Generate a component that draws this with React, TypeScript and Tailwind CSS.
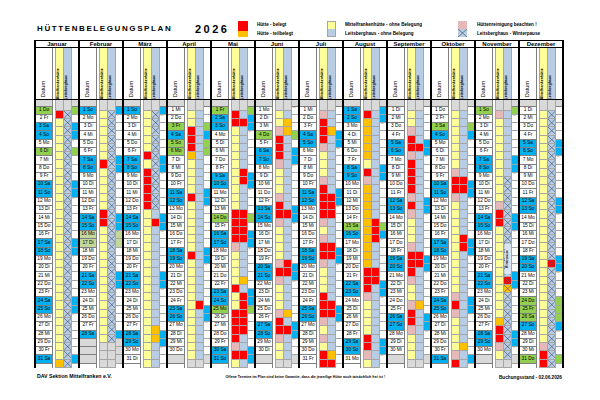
const MONTHS = ["Januar", "Februar", "März", "April", "Mai", "Juni", "Juli", "August", "September", "Oktober", "November", "Dezember"];
const WD = ["So", "Mo", "Di", "Mi", "Do", "Fr", "Sa"];

const HOLI: Record<number, number[]> = { 0: [1, 6], 3: [3, 5, 6], 4: [1, 14, 25], 5: [4], 7: [15], 9: [3], 10: [1], 11: [24, 25, 26, 31] };
const FASCHING: Record<number, number[]> = { 1: [16, 17] };

// nights: r = belegt, o = teilbelegt, p = Reinigung, x = Winterpause, R/O = Winterpause + belegt/teilbelegt
const MF = [
  "r1 o31",
  "r7 r13-14",
  "r6 r8-12",
  "r3-5 o6 r11 r18",
  "r1-2 r13-16 p17 r22 r25-28 p29 r30",
  "p3 r4-6 p7 p11 r12-13 p14 p19 r20 p21 p25 r26-27 p28",
  "p1 r2-4 p5 p9 r10-13 p14 p16 r17-18 p19 r23-25 p26 p28 r30-31",
  "r1 o2-6 r8 p9 o10-19 r20-22 p23 r28-29 p30",
  "p3 r4-5 p6 r7-10 p11 r12 p13 p17 r18-20 p21 p24 r25-26 p27",
  "p8 r9-10 p11 p23 r24 p25 p30 r31",
  "p1 p12 r13-14 o26 r27-28 p29",
  "p29 r30-31",
];
const LH = [
  "x1-31",
  "x1-28",
  "x1-12 r14 o27-28",
  "r24",
  "r2 r8-9 r13-16 o21 r23-27 r30",
  "o2-3 r13 r19-20 o25 r27",
  "o3 r11-13 r17-18 r24-25 o30 r31",
  "r14-16 r20-21",
  "r5 r18-19 o24",
  "r9-10 r16-17 o29",
  "x9-30 R21 O22",
  "x1-31 R19",
];

function parse(spec: string, days: number) {
  const a: string[] = Array(31).fill("");
  for (const t of spec.split(" ").filter(Boolean)) {
    const m = /^([a-zA-Z])(\d+)(?:-(\d+))?$/.exec(t);
    if (!m) continue;
    const from = Number(m[2]);
    const to = m[3] ? Number(m[3]) : from;
    for (let d = from; d <= to; d++) a[d - 1] = m[1];
  }
  for (let d = days + 1; d <= 31; d++) a[d - 1] = "g";
  return a;
}

function isoWeek(date: Date) {
  const d = new Date(Date.UTC(date.getFullYear(), date.getMonth(), date.getDate()));
  const day = d.getUTCDay() || 7;
  d.setUTCDate(d.getUTCDate() + 4 - day);
  const y0 = new Date(Date.UTC(d.getUTCFullYear(), 0, 1));
  return Math.ceil(((d.getTime() - y0.getTime()) / 86400000 + 1) / 7);
}

function dayBg(m: number, d: number, days: number) {
  if (d > days) return "bg-[#d9d9d9]";
  if (HOLI[m]?.includes(d)) return "bg-[#92d050]";
  if (FASCHING[m]?.includes(d)) return "bg-[#c4d79b]";
  const dow = new Date(2026, m, d).getDay();
  if (dow === 0 || dow === 6) return "bg-[#00b0f0]";
  return "bg-white";
}

function Cross() {
  return (
    <svg className="absolute inset-0 h-full w-full" viewBox="0 0 10 10" preserveAspectRatio="none">
      <path d="M0 0L10 10M10 0L0 10" stroke="#4b5a70" strokeWidth="0.7" vectorEffect="non-scaling-stroke" fill="none" />
    </svg>
  );
}

function Night({ s, base }: { s: string; base: string }) {
  let bg = base;
  if (s === "r" || s === "R") bg = "bg-[#ff0000]";
  else if (s === "o" || s === "O") bg = "bg-[#ffc000]";
  else if (s === "p") bg = "bg-[#e6b8b7]";
  else if (s === "g") bg = "bg-[#d9d9d9]";
  const cross = s === "x" || s === "R" || s === "O";
  return (
    <div className={`relative h-[8.3px] shrink-0 border-b border-[#a6a6a6] ${bg}`}>
      {cross && <Cross />}
    </div>
  );
}

const ROWS = Array.from({ length: 31 }, (_, i) => i + 1);

function Month({ m }: { m: number }) {
  const days = new Date(2026, m + 1, 0).getDate();
  const mf = parse(MF[m], days);
  const lh = parse(LH[m], days);
  const last = m === 11;
  return (
    <div className={`flex flex-col border-l-2 border-black ${last ? "w-[46px] border-r-2" : "w-[44px]"}`}>
      {/* month name */}
      <div className="flex h-[6.5px] items-center justify-center border-b border-black text-[6px] font-bold leading-none">
        {MONTHS[m]}
      </div>

      {/* vertical headers */}
      <div className="flex h-[52.5px] border-b border-black">
        <div className="flex w-[17px] items-end justify-center border-r border-[#7f7f7f] pb-[2px]">
          <span className="rotate-180 text-[5.5px] leading-none [writing-mode:vertical-rl]">Datum</span>
        </div>
        <div className="w-[1.5px]" />
        <div className="flex w-[9px] justify-center border-x border-[#a6a6a6] bg-[#ffff99] pt-[3px]">
          <span className="rotate-180 text-[3.6px] font-bold leading-none [writing-mode:vertical-rl]">Mittelfrankenhütte</span>
        </div>
        <div className="flex w-[8.5px] justify-center border-r border-[#a6a6a6] bg-[#b8cce4] pt-[3px]">
          <span className="rotate-180 text-[3.6px] font-bold leading-none [writing-mode:vertical-rl]">Leitsberghaus</span>
        </div>
        <div className="w-[6px]" />
      </div>

      {/* body */}
      <div className="flex">
        <div className="flex w-[17px] flex-col border-r border-[#7f7f7f]">
          <div className="h-[6.5px] shrink-0 border-b border-[#7f7f7f] bg-[#d9d9d9]" />
          {ROWS.map((d) => (
            <div
              key={d}
              className={`flex h-[8.3px] shrink-0 items-center justify-center border-b border-[#7f7f7f] text-[4.8px] leading-none ${dayBg(m, d, days)}`}
            >
              {d <= days ? `${d} ${WD[new Date(2026, m, d).getDay()]}` : ""}
            </div>
          ))}
        </div>
        <div className="w-[1.5px]" />
        <div className="flex w-[9px] flex-col border-x border-[#a6a6a6]">
          <div className="h-[10.65px] shrink-0 border-b border-[#a6a6a6] bg-[#d9d9d9]" />
          {mf.map((s, i) => (
            <Night key={i} s={s} base="bg-[#ffff99]" />
          ))}
        </div>
        <div className="relative flex w-[8.5px] flex-col border-r border-[#a6a6a6]">
          <div className="h-[10.65px] shrink-0 border-b border-[#a6a6a6] bg-[#d9d9d9]" />
          {lh.map((s, i) => (
            <Night key={i} s={s} base="bg-[#b8cce4]" />
          ))}
          {m === 10 && (
            <div className="absolute left-[1px] top-[144px] flex h-[30px] w-[6px] items-center justify-center bg-[#dbe5f1]">
              <span className="rotate-180 text-[3px] font-bold leading-none [writing-mode:vertical-rl]">Winterpause</span>
            </div>
          )}
        </div>
        <div className="flex w-[6px] flex-col">
          <div className="h-[6.5px] shrink-0 border-b border-[#7f7f7f] bg-[#d9d9d9]" />
          {ROWS.map((d) => {
            const date = new Date(2026, m, d);
            const monday = d <= days && date.getDay() === 1;
            return (
              <div key={d} className={`relative h-[8.3px] shrink-0 border-b border-[#a6a6a6] ${dayBg(m, d, days)}`}>
                {monday && (
                  <span className="absolute left-[0.5px] top-0 text-[2.5px] leading-none text-[#7f7f7f]">{isoWeek(date)}</span>
                )}
              </div>
            );
          })}
        </div>
      </div>
    </div>
  );
}

function LegendText({ a, b, w }: { a: string; b: string; w: string }) {
  return (
    <div className={`flex flex-col text-[4.6px] font-bold leading-[9px] ${w}`}>
      <span>{a}</span>
      <span>{b}</span>
    </div>
  );
}

export default function App() {
  return (
    <div className="h-[400px] w-[600px] overflow-hidden bg-white pt-[18px] font-['Liberation_Sans',Arial,sans-serif] text-black">
      {/* title + legend */}
      <div className="flex h-[22px] items-center pl-[37px]">
        <div className="w-[158px] text-[8px] font-bold tracking-[1.6px]">HÜTTENBELEGUNGSPLAN</div>
        <div className="w-[43px] text-[11px] font-bold tracking-[2.5px]">2026</div>
        <div className="flex h-[16px] w-[10px] flex-col">
          <div className="h-[10px] bg-[#ff0000]" />
          <div className="h-[6px] bg-[#ffc000]" />
        </div>
        <LegendText a="Hütte - belegt" b="Hütte - teilbelegt" w="ml-[9px] w-[70px]" />
        <div className="flex h-[16px] w-[9px] flex-col border border-[#a6a6a6]">
          <div className="h-[7px] bg-[#ffff99]" />
          <div className="h-[7px] bg-[#b8cce4]" />
        </div>
        <LegendText a="Mittelfrankenhütte - ohne Belegung" b="Leitsberghaus - ohne Belegung" w="ml-[9px] w-[113px]" />
        <div className="flex h-[16px] w-[9px] flex-col">
          <div className="h-[8px] bg-[#e6b8b7]" />
          <div className="relative h-[8px] bg-[#b8cce4]">
            <Cross />
          </div>
        </div>
        <LegendText a="Hüttenreinigung beachten !" b="Leitsberghaus - Winterpause" w="ml-[10px] w-[100px]" />
      </div>

      {/* calendar */}
      <div className="ml-[34px] flex w-fit border-t border-black">
        {MONTHS.map((_, m) => (
          <Month key={m} m={m} />
        ))}
      </div>

      {/* footer */}
      <div className="mt-[5.5px] flex h-[8px] items-center justify-between pl-[37px] pr-[38px] font-bold">
        <span className="text-[5.2px]">DAV Sektion Mittelfranken e.V.</span>
        <span className="text-[3.6px]">Offene Termine im Plan sind keine Garantie, dass die jeweilige Hütte auch tatsächlich frei ist !</span>
        <span className="text-[4.7px]">Buchungsstand - 02.06.2026</span>
      </div>
    </div>
  );
}
